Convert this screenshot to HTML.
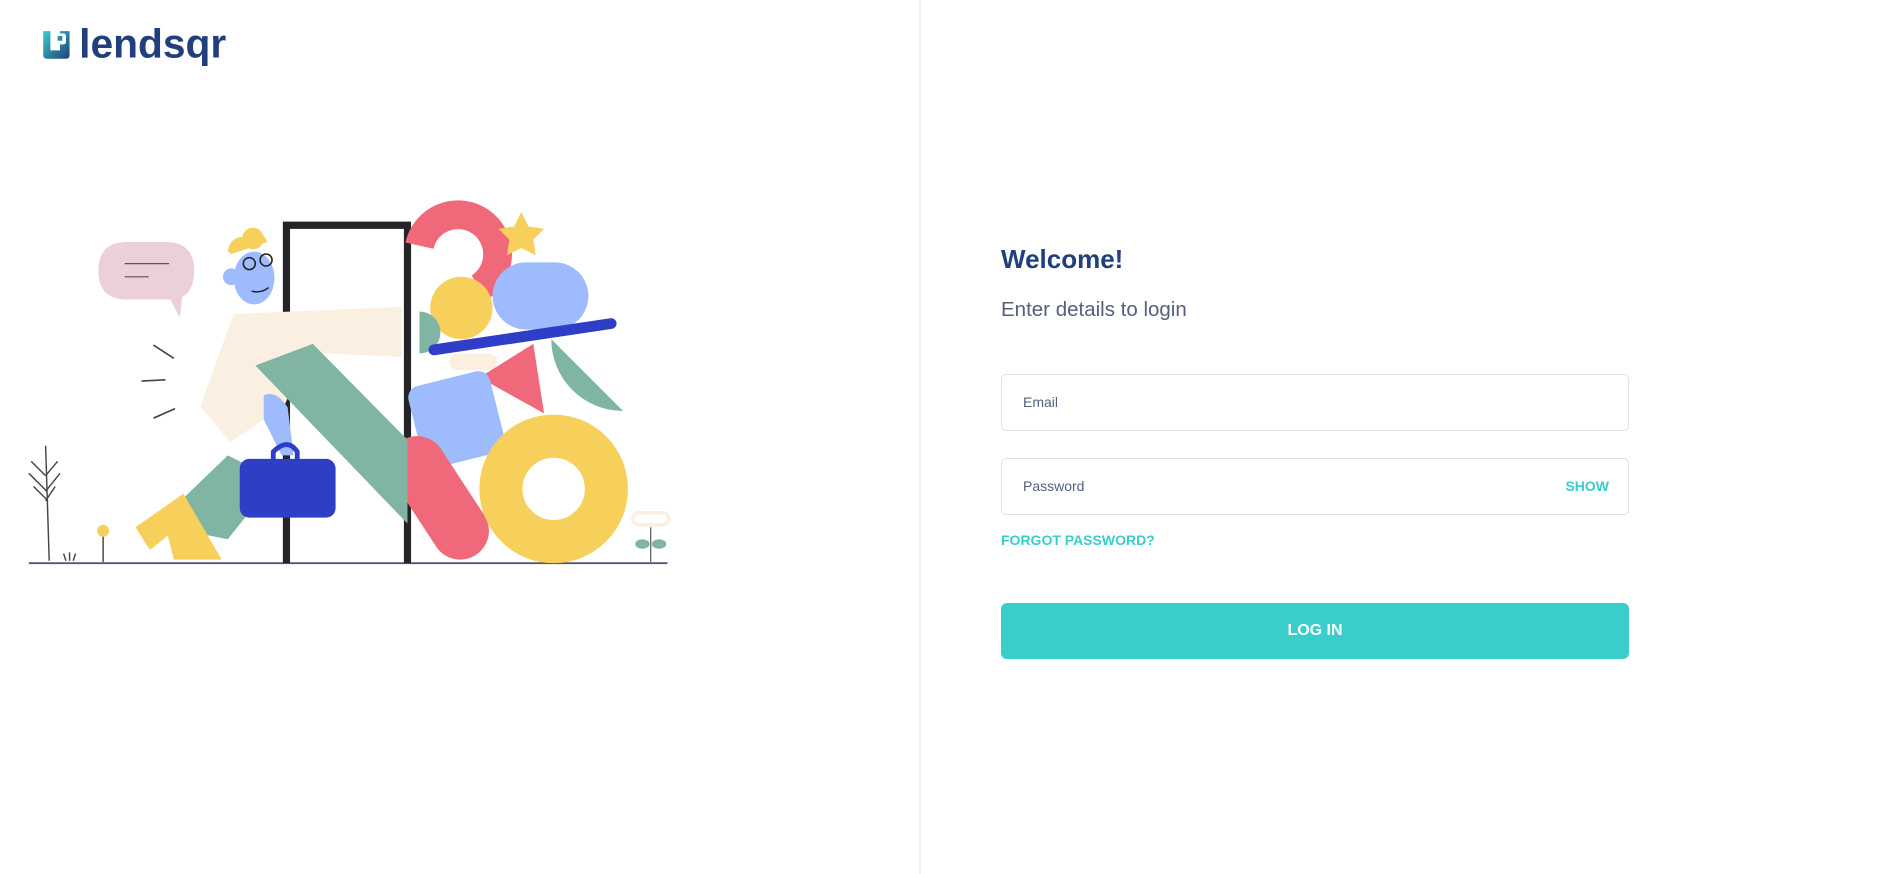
<!DOCTYPE html>
<html><head><meta charset="utf-8"><style>
html,body{margin:0;padding:0;width:1879px;height:874px;overflow:hidden;background:#fff;font-family:"Liberation Sans",sans-serif;}
.divider{position:absolute;left:919px;top:0;width:2px;height:874px;background:#f0f0f0;}
#art{position:absolute;left:0;top:0;}
.h1{position:absolute;left:1001px;top:244px;font-size:26px;font-weight:bold;color:#213F7D;}
.sub{position:absolute;left:1001px;top:298px;font-size:20.5px;color:#545F7D;}
.inp{position:absolute;left:1001px;width:626px;height:55px;border:1px solid #dfe1e6;border-radius:5px;box-sizing:content-box;}
.inp span{position:absolute;left:21px;top:19px;font-size:14px;color:#545F7D;}
.inp b{position:absolute;right:19px;top:19px;font-size:14px;color:#39CDCC;}
.forgot{position:absolute;left:1001px;top:532px;font-size:14px;font-weight:bold;color:#39CDCC;}
.btn{position:absolute;left:1001px;top:603px;width:628px;height:56px;background:#39CDCC;border-radius:6px;color:#fff;font-weight:bold;font-size:16px;text-align:center;line-height:56px;}
</style></head><body>
<div class="divider"></div>
<svg id="art" width="1879" height="874" viewBox="0 0 1568 729.4">
 <defs><linearGradient id="lg" x1="0" y1="0" x2="1" y2="1"><stop offset="0" stop-color="#39CDCC"/><stop offset="1" stop-color="#213F7D"/></linearGradient></defs>
 <path d="M36 26h6v16h8v-16h8v20q0 3-3 3h-16q-3 0-3-3z" fill="url(#lg)"/>
 <rect x="45" y="28" width="10" height="9" rx="2" fill="#fff"/>
 <rect x="48" y="30" width="4" height="4" fill="#2a8fa6"/>
 <text x="66" y="48" font-family="Liberation Sans" font-weight="bold" font-size="34" fill="#213F7D">lendsqr</text>
 <line x1="24" y1="470" x2="557" y2="470" stroke="#5a5470" stroke-width="1.6"/>
 <g stroke="#444" stroke-width="1.2" fill="none">
  <line x1="38" y1="372" x2="41" y2="468"/>
  <path d="M26 385l12 12 M24 395l15 15 M28 406l12 12 M48 385l-10 12 M50 395l-12 15 M46 406l-8 12"/>
  <path d="M55 468l-2-6 M58 468l0-7 M61 468l2-6"/>
  <line x1="86" y1="446" x2="86" y2="469"/>
 </g>
 <circle cx="86" cy="443" r="5" fill="#F7CF5B"/>
 <path d="M82 226q0-24 24-24h32q24 0 24 24 q0 16-10 22l-2 17-8-15h-36q-24 0-24-24z" fill="#ECD0D8"/>
 <line x1="104" y1="220" x2="141" y2="220" stroke="#555" stroke-width="1"/>
 <line x1="104" y1="231" x2="124" y2="231" stroke="#555" stroke-width="1"/>
 <g stroke="#444" stroke-width="1.4"><line x1="128" y1="288" x2="145" y2="299"/><line x1="118" y1="318" x2="138" y2="317"/><line x1="128" y1="349" x2="146" y2="341"/></g>
 <path d="M239 470V188h101v282" fill="none" stroke="#252429" stroke-width="6"/>
 <path d="M350 205a33 33 0 1 1 50 35" fill="none" stroke="#F0697B" stroke-width="24"/>
 <path d="M435 177l6 12 13 2-9 9 2 13-12-6-12 6 2-13-9-9 13-2z" fill="#F7CF5B"/>
 <circle cx="385" cy="257" r="26" fill="#F7CF5B"/>
 <rect x="411" y="219" width="80" height="56" rx="28" fill="#9EBCFD"/>
 <path d="M350 260a14 14 0 0 1 0 35z" fill="#80B5A3"/>
 <line x1="362" y1="292" x2="510" y2="270" stroke="#2F3EC6" stroke-width="9" stroke-linecap="round"/>
 <rect x="375" y="295" width="40" height="14" rx="7" fill="#FBEFE2"/>
 <path d="M400 315l45-28 9 58z" fill="#F0697B"/>
 <path d="M460 283a60 60 0 0 0 60 60z" fill="#80B5A3"/>
 <rect x="346" y="315" width="70" height="70" rx="10" transform="rotate(-14 381 350)" fill="#9EBCFD"/>
 <path d="M348 388l36 55" stroke="#F0697B" stroke-width="48" stroke-linecap="round"/>
 <circle cx="462" cy="408" r="44" fill="none" stroke="#F7CF5B" stroke-width="36"/>
 <rect x="528" y="428" width="30" height="10" rx="5" fill="none" stroke="#FBEFE2" stroke-width="3"/>
 <line x1="543" y1="440" x2="543" y2="469" stroke="#555" stroke-width="1"/>
 <ellipse cx="536" cy="454" rx="6" ry="4" fill="#80B5A3"/><ellipse cx="550" cy="454" rx="6" ry="4" fill="#80B5A3"/>
 <path d="M195 262l140-6v42l-78-4 -20 45 -45 30 -25-30z" fill="#FBEFE2"/>
 <path d="M257 290l-3 50" stroke="#333" stroke-width="1"/>
 <path d="M213 305l48-18 79 80v70z" fill="#80B5A3"/>
 <path d="M130 438l60-58 40 20 -40 50z" fill="#80B5A3"/>
 <path d="M113 440l40-28 32 55h-40l-5-20-15 12z" fill="#F7CF5B"/>
 <ellipse cx="212" cy="232" rx="17" ry="22" fill="#9EBCFD"/>
 <circle cx="193" cy="231" r="7" fill="#9EBCFD"/>
 <path d="M190 210q2-15 20-12q8-8 13 4l-30 10z" fill="#F7CF5B"/>
 <circle cx="211" cy="199" r="9" fill="#F7CF5B"/>
 <g fill="none" stroke="#222" stroke-width="1.3"><circle cx="208" cy="220" r="5"/><circle cx="222" cy="217" r="5"/><path d="M210 243q8 2 14-3"/></g>
 <path d="M220 330q10-5 20 10l5 40h-10l-15-30z" fill="#9EBCFD"/>
 <path d="M228 385v-8q12-12 20 0v8" fill="none" stroke="#2F3EC6" stroke-width="4"/>
 <rect x="200" y="383" width="80" height="49" rx="8" fill="#2F3EC6"/>
</svg>
<div class="h1">Welcome!</div>
<div class="sub">Enter details to login</div>
<div class="inp" style="top:374px"><span>Email</span></div>
<div class="inp" style="top:458px"><span>Password</span><b>SHOW</b></div>
<div class="forgot">FORGOT PASSWORD?</div>
<div class="btn">LOG IN</div>
</body></html>
